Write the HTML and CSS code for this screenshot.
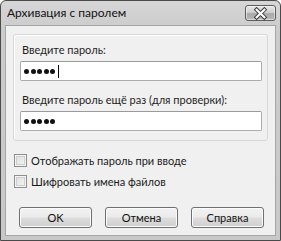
FILE: index.html
```html
<!DOCTYPE html>
<html lang="ru">
<head>
<meta charset="utf-8">
<title>Архивация с паролем</title>
<link rel="stylesheet" href="styles.css">
</head>
<body>
<div class="window">
  <div class="titlebar">
    <span class="title">Архивация с паролем</span>
    <div class="close">
      <svg width="30" height="15" viewBox="0 0 30 15">
        <path d="M11 3.5 L19 11.5 M19 3.5 L11 11.5" stroke="#3c3c3c" stroke-width="4.2" stroke-linecap="square"/>
        <path d="M11 3.5 L19 11.5 M19 3.5 L11 11.5" stroke="#ffffff" stroke-width="2.2" stroke-linecap="square"/>
      </svg>
    </div>
  </div>
  <div class="content">
    <div class="group">
      <div class="label">Введите пароль:</div>
      <div class="field"><span class="dot"></span><span class="dot"></span><span class="dot"></span><span class="dot"></span><span class="dot"></span><span class="caret"></span></div>
      <div class="label second">Введите пароль ещё раз (для проверки):</div>
      <div class="field"><span class="dot"></span><span class="dot"></span><span class="dot"></span><span class="dot"></span><span class="dot"></span></div>
    </div>
    <div class="checks">
      <label class="check"><span class="box"></span>Отображать пароль при вводе</label>
      <label class="check"><span class="box"></span>Шифровать имена файлов</label>
    </div>
    <div class="buttons">
      <div class="btn">OK</div>
      <div class="btn">Отмена</div>
      <div class="btn">Справка</div>
    </div>
  </div>
</div>
</body>
</html>
```
FILE: styles.css
```css
* { box-sizing: border-box; }
html, body { margin: 0; padding: 0; background: #ffffff; }
body {
  width: 281px;
  height: 241px;
  font-family: Lato, "Noto Sans", sans-serif;
  font-size: 11px;
  color: #1a1a1a;
}
.window {
  width: 281px;
  height: 241px;
  border: 1px solid #4a4a4a;
  border-radius: 6px 6px 0 0;
  background: linear-gradient(#d6d6d6, #cbcbcb 30px, #c8c8c8);
  display: flex;
  flex-direction: column;
  padding: 0 4px 4px 4px;
}
.titlebar {
  height: 24px;
  display: flex;
  align-items: flex-start;
  justify-content: space-between;
  flex-shrink: 0;
}
.title {
  margin-top: 4px;
  margin-left: 2px;
  font-size: 12px;
  color: #111;
}
.close {
  margin-top: 4px;
  margin-right: 0;
  width: 31px;
  height: 16px;
  border: 1px solid #5c5c5c;
  border-radius: 3px;
  background: linear-gradient(#e6e6e6, #d0d0d0 45%, #a9a9a9 55%, #b8b8b8);
  box-shadow: inset 0 0 0 1px rgba(255,255,255,0.5);
  display: flex;
  align-items: center;
  justify-content: center;
}
.close svg { display: block; }
.content {
  flex: 1;
  background: #f0f0f0;
  border: 1px solid #a6a6a6;
  padding: 8px 7px 0 7px;
}
.group {
  height: 107px;
  border: 1px solid #d8d8d8;
  border-radius: 3px;
  box-shadow: inset 1px 1px 0 #fff;
  padding: 7px 7px 0 6px;
}
.label {
  height: 16px;
  line-height: 16px;
  padding-left: 2px;
  color: #1e1e1e;
}
.label.second { margin-top: 11px; }
.field {
  margin-top: 3px;
  width: 242px;
  height: 20px;
  background: #fff;
  border: 1px solid #acacac;
  border-top-color: #9a9a9a;
  border-radius: 2px;
  display: flex;
  align-items: center;
  padding-left: 3px;
  gap: 1.6px;
}
.dot {
  width: 5px;
  height: 5px;
  border-radius: 50%;
  background: #111;
}
.caret {
  width: 1px;
  height: 13px;
  background: #000;
  margin-left: 1px;
}
.checks {
  margin-top: 13px;
  display: flex;
  flex-direction: column;
  gap: 8px;
}
.check {
  display: flex;
  align-items: center;
  height: 13px;
  gap: 4px;
  padding-left: 1px;
}
.box {
  width: 13px;
  height: 13px;
  border: 1px solid #8e8f8f;
  background: linear-gradient(135deg, #dcdcdc, #f6f6f6);
  box-shadow: inset 0 0 0 1px #f4f4f4, inset 0 0 0 2px #cfcfcf;
}
.buttons {
  margin-top: 19px;
  display: flex;
  gap: 13px;
  padding-left: 6px;
}
.btn {
  width: 73px;
  height: 21px;
  border: 1px solid #707070;
  border-radius: 3px;
  background: linear-gradient(#f2f2f2, #ebebeb 48%, #dddddd 52%, #cfcfcf);
  box-shadow: inset 0 0 0 1px #fcfcfc;
  display: flex;
  align-items: center;
  justify-content: center;
  color: #111;
}
```
